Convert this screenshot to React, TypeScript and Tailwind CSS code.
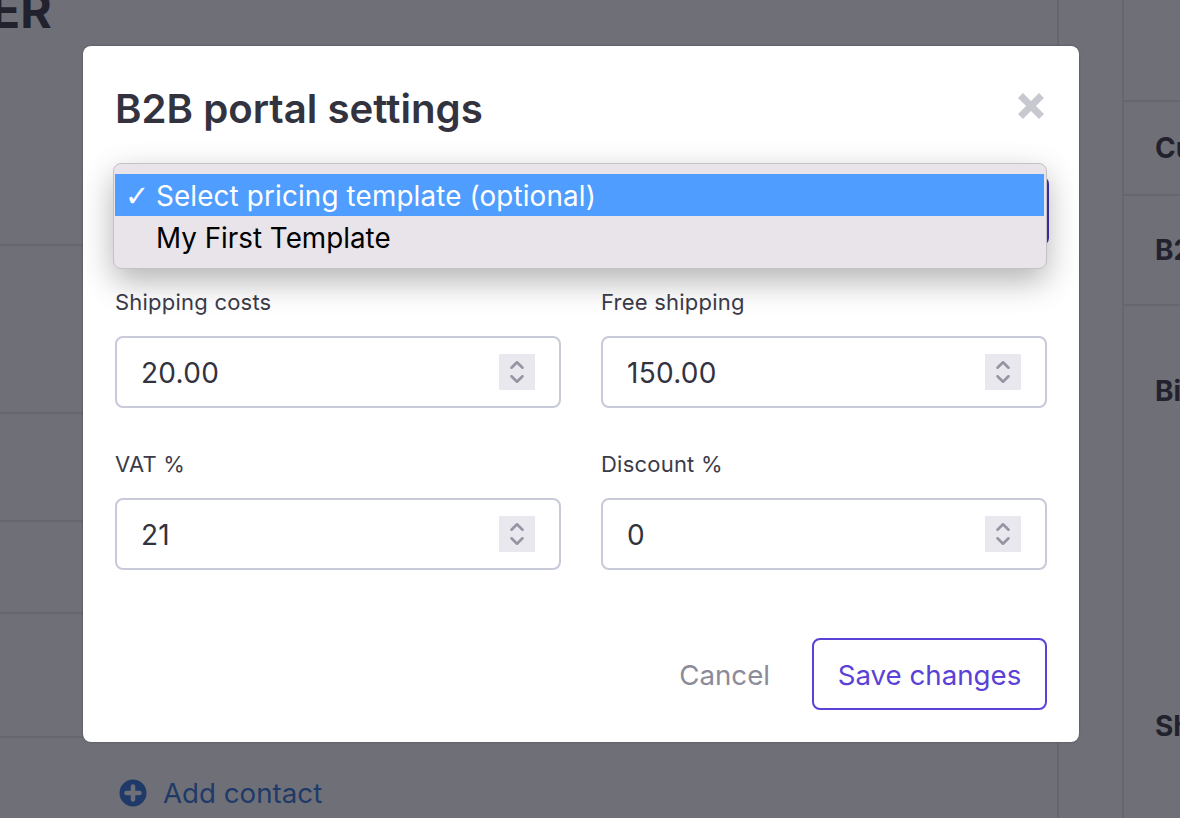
import { ChevronDown, ChevronUp } from "lucide-react";

function NumberField({ label, value }: { label: string; value: string }) {
  return (
    <div>
      <div className="mb-[22px] text-[22px] leading-6 tracking-[0.01em] text-[#3b3b4a]">{label}</div>
      <div className="flex h-[72px] items-center justify-between rounded-lg border-2 border-[#c9cad9] pr-[24px] pl-[24px] text-[28px] tracking-[0.01em] text-[#33333f]">
        <span className="pt-[2px]">{value}</span>
        <div className="flex h-9 w-9 flex-col items-center justify-center bg-[#e8e8ee] text-[#9494a3]">
          <ChevronUp size={24} strokeWidth={2.8} className="-mb-[4px]" />
          <ChevronDown size={24} strokeWidth={2.8} className="-mt-[4px]" />
        </div>
      </div>
    </div>
  );
}

export default function App() {
  return (
    <div className="relative h-[818px] w-[1180px] overflow-hidden bg-[#6f7077] font-['Inter',sans-serif]">
      <div className="flex h-full">
        <div className="flex w-[1059px] flex-col border-r-2 border-[#66666e]">
          <div className="h-[246px] shrink-0 border-b-2 border-[#66666e]">
            <div className="-mt-[15px] -ml-[9px] text-[48px] leading-[52px] font-bold text-[#22222e]">ER</div>
          </div>
          <div className="h-[168px] shrink-0 border-b-2 border-[#66666e]" />
          <div className="h-[108px] shrink-0 border-b-2 border-[#66666e]" />
          <div className="h-[92px] shrink-0 border-b-2 border-[#66666e]" />
          <div className="h-[124px] shrink-0 border-b-2 border-[#66666e]" />
          <div className="mt-[39px] ml-[119px] flex items-center gap-[16px] text-[27.7px] leading-8 text-[#1f3a68]">
            <svg width="28" height="28" viewBox="0 0 28 28">
              <circle cx="14" cy="14" r="13.5" fill="#1f3a68" />
              <path d="M14 7.5v13M7.5 14h13" stroke="#6f7077" strokeWidth="4.5" strokeLinecap="round" />
            </svg>
            <span>Add contact</span>
          </div>
        </div>
        <div className="w-[63px] shrink-0" />
        <div className="flex min-w-0 flex-1 flex-col overflow-hidden border-l-2 border-[#66666e] text-[28px] leading-8 font-bold whitespace-nowrap text-[#22222e]">
          <div className="h-[102px] shrink-0 border-b-2 border-[#66666e]" />
          <div className="flex h-[94px] shrink-0 items-center border-b-2 border-[#66666e] pl-[31px]">Customer</div>
          <div className="flex h-[110px] shrink-0 items-center border-b-2 border-[#66666e] pl-[31px]">B2B</div>
          <div className="mt-[69px] pl-[31px]">Billing</div>
          <div className="mt-[303px] pl-[31px]">Shipping</div>
        </div>
      </div>

      <div className="absolute top-[46px] left-[83px] flex h-[696px] w-[996px] flex-col rounded-lg bg-white px-8 pt-[38px] shadow-[0_0_2px_rgba(40,40,50,0.6)]">
        <div className="flex items-start justify-between">
          <h2 className="text-[40.2px] leading-[50px] font-semibold text-[#33333f]">B2B portal settings</h2>
          <svg width="26" height="26" viewBox="0 0 26 26" className="mt-[9px] mr-[3px] text-[#c8c9d0]">
            <path d="M2.5 2.5l21 21M23.5 2.5l-21 21" stroke="currentColor" strokeWidth="7" />
          </svg>
        </div>

        <div className="relative mt-[42px] -mx-[2px] h-[70px] rounded-lg border-2 border-[#4332b8]">
          <div className="absolute -top-[15px] -left-[2px] right-0 h-[106px] rounded-lg border border-[#c4c2c6] bg-[#e8e4e9] py-[10px] text-[27.8px] text-black shadow-[0_12px_32px_rgba(0,0,0,0.3)]">
            <div className="mr-[2px] ml-[1px] flex h-[42px] items-center bg-[#4f9dff] pt-[4px] tracking-[0.15px] text-white">
              <span className="w-[41px] pl-[10px] font-['DejaVu_Sans',sans-serif] text-[29px]">✓</span>
              Select pricing template (optional)
            </div>
            <div className="flex h-[42px] items-center pt-[4px] pl-[42px]">My First Template</div>
          </div>
        </div>

        <div className="mt-[44px] grid grid-cols-2 gap-x-10 gap-y-[44px]">
          <NumberField label="Shipping costs" value="20.00" />
          <NumberField label="Free shipping" value="150.00" />
          <NumberField label="VAT %" value="21" />
          <NumberField label="Discount %" value="0" />
        </div>

        <div className="mt-[68px] flex items-center justify-end gap-[42px] text-[27.7px]">
          <span className="pt-[4px] text-[#8b8b99]">Cancel</span>
          <button className="h-[72px] w-[235px] rounded-lg border-2 border-[#5a42d6] pt-[4px] text-[#5a42d6]">Save changes</button>
        </div>
      </div>
    </div>
  );
}
